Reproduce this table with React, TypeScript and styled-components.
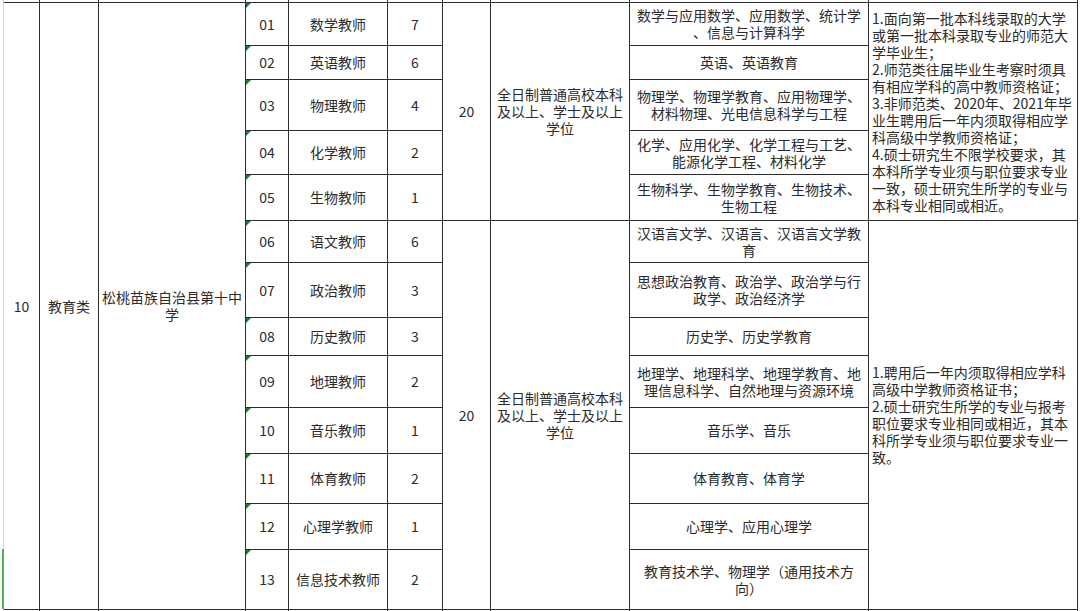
import styled, { createGlobalStyle } from "styled-components";

const GlobalStyle = createGlobalStyle`
  html, body {
    margin: 0;
    padding: 0;
    background: #fff;
  }
  body {
    width: 1080px;
    height: 611px;
    overflow: hidden;
    font-family: "Noto Sans CJK SC", "Noto Sans", sans-serif;
    color: #2b2b2b;
  }
`;

const Page = styled.div`
  padding-left: 3px;
`;

const Sheet = styled.div`
  display: grid;
  grid-template-columns: 36px 59px 147px 43px 99px 55px 48px 139px 239px 209px;
  grid-template-rows: 3px 43px 34px 51px 44px 46px 42px 55px 38px 52px 46px 50px 46px 60px 4px;
  width: max-content;
  border-left: 1px solid #d2d2d2;
`;

const Cell = styled.div<{ $rows?: number; $left?: boolean }>`
  position: relative;
  grid-row: span ${({ $rows }) => $rows ?? 1};
  display: flex;
  flex-direction: column;
  justify-content: center;
  align-items: ${({ $left }) => ($left ? "flex-start" : "center")};
  padding: 0 ${({ $left }) => ($left ? "3px" : "0")};
  border-right: 1px solid #2e2e2e;
  border-bottom: 1px solid #2e2e2e;
  font-size: 14px;
  line-height: 17px;
  text-align: ${({ $left }) => ($left ? "left" : "center")};
  white-space: nowrap;
`;

const TailCell = styled.div<{ $bottom?: boolean }>`
  border-right: 1px solid #2e2e2e;
  border-bottom: ${({ $bottom }) => ($bottom ? "none" : "1px solid #2e2e2e")};
`;

const IndexCell = styled(Cell)`
  &::after {
    content: "";
    position: absolute;
    left: -2px;
    bottom: 0;
    width: 2px;
    height: 60px;
    background: #4caf50;
  }
`;

const CodeCell = styled(Cell)`
  &::before {
    content: "";
    position: absolute;
    top: 0;
    left: 0;
    border-top: 5px solid #1f7a36;
    border-right: 5px solid transparent;
  }
`;

const Line = styled.span`
  display: block;
`;

interface Post {
  code: string;
  name: string;
  count: number;
  major: string[];
}

const posts: Post[] = [
  { code: "01", name: "数学教师", count: 7, major: ["数学与应用数学、应用数学、统计学", "、信息与计算科学"] },
  { code: "02", name: "英语教师", count: 6, major: ["英语、英语教育"] },
  { code: "03", name: "物理教师", count: 4, major: ["物理学、物理学教育、应用物理学、", "材料物理、光电信息科学与工程"] },
  { code: "04", name: "化学教师", count: 2, major: ["化学、应用化学、化学工程与工艺、", "能源化学工程、材料化学"] },
  { code: "05", name: "生物教师", count: 1, major: ["生物科学、生物学教育、生物技术、", "生物工程"] },
  { code: "06", name: "语文教师", count: 6, major: ["汉语言文学、汉语言、汉语言文学教", "育"] },
  { code: "07", name: "政治教师", count: 3, major: ["思想政治教育、政治学、政治学与行", "政学、政治经济学"] },
  { code: "08", name: "历史教师", count: 3, major: ["历史学、历史学教育"] },
  { code: "09", name: "地理教师", count: 2, major: ["地理学、地理科学、地理学教育、地", "理信息科学、自然地理与资源环境"] },
  { code: "10", name: "音乐教师", count: 1, major: ["音乐学、音乐"] },
  { code: "11", name: "体育教师", count: 2, major: ["体育教育、体育学"] },
  { code: "12", name: "心理学教师", count: 1, major: ["心理学、应用心理学"] },
  { code: "13", name: "信息技术教师", count: 2, major: ["教育技术学、物理学（通用技术方", "向）"] },
];

const education = ["全日制普通高校本科", "及以上、学士及以上", "学位"];

const groups = [
  {
    size: 5,
    notes: [
      "1.面向第一批本科线录取的大学",
      "或第一批本科录取专业的师范大",
      "学毕业生；",
      "2.师范类往届毕业生考察时须具",
      "有相应学科的高中教师资格证；",
      "3.非师范类、2020年、2021年毕",
      "业生聘用后一年内须取得相应学",
      "科高级中学教师资格证；",
      "4.硕士研究生不限学校要求，其",
      "本科所学专业须与职位要求专业",
      "一致，硕士研究生所学的专业与",
      "本科专业相同或相近。",
    ],
  },
  {
    size: 8,
    notes: [
      "1.聘用后一年内须取得相应学科",
      "高级中学教师资格证书；",
      "2.硕士研究生所学的专业与报考",
      "职位要求专业相同或相近，其本",
      "科所学专业须与职位要求专业一",
      "致。",
    ],
  },
];

function Lines({ items }: { items: string[] }) {
  return (
    <>
      {items.map((t, i) => (
        <Line key={i}>{t}</Line>
      ))}
    </>
  );
}

export default function App() {
  const cols = Array.from({ length: 10 });
  let start = 0;

  return (
    <Page>
      <GlobalStyle />
      <Sheet>
        {cols.map((_, i) => (
          <TailCell key={`top-${i}`} />
        ))}

        <IndexCell $rows={13}>10</IndexCell>
        <Cell $rows={13}>教育类</Cell>
        <Cell $rows={13}>
          <Lines items={["松桃苗族自治县第十中", "学"]} />
        </Cell>

        {groups.map((g, gi) => {
          const rows = posts.slice(start, start + g.size);
          start += g.size;
          return rows.map((p, ri) => (
            <>
              <CodeCell key={`c-${p.code}`}>{p.code}</CodeCell>
              <Cell key={`n-${p.code}`}>{p.name}</Cell>
              <Cell key={`k-${p.code}`}>{p.count}</Cell>
              {ri === 0 && (
                <>
                  <Cell key={`t-${gi}`} $rows={g.size}>20</Cell>
                  <Cell key={`e-${gi}`} $rows={g.size}>
                    <Lines items={education} />
                  </Cell>
                </>
              )}
              <Cell key={`m-${p.code}`}>
                <Lines items={p.major} />
              </Cell>
              {ri === 0 && (
                <Cell key={`x-${gi}`} $rows={g.size} $left>
                  <Lines items={g.notes} />
                </Cell>
              )}
            </>
          ));
        })}

        {cols.map((_, i) => (
          <TailCell key={`bottom-${i}`} $bottom />
        ))}
      </Sheet>
    </Page>
  );
}
